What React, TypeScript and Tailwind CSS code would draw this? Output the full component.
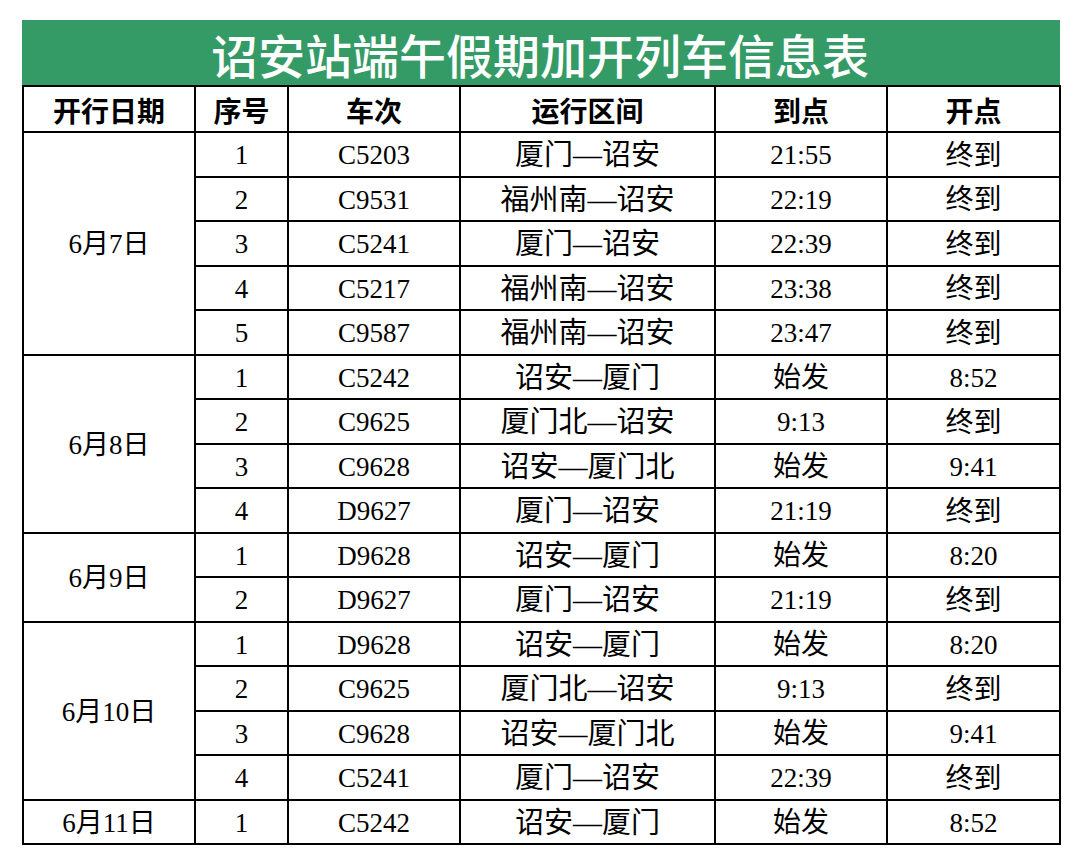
import React from "react";

type Row = { no: string; train: string; route: string; arr: string; dep: string };
type Group = { date: string; rows: Row[] };

const groups: Group[] = [
  {
    date: "6月7日",
    rows: [
      { no: "1", train: "C5203", route: "厦门—诏安", arr: "21:55", dep: "终到" },
      { no: "2", train: "C9531", route: "福州南—诏安", arr: "22:19", dep: "终到" },
      { no: "3", train: "C5241", route: "厦门—诏安", arr: "22:39", dep: "终到" },
      { no: "4", train: "C5217", route: "福州南—诏安", arr: "23:38", dep: "终到" },
      { no: "5", train: "C9587", route: "福州南—诏安", arr: "23:47", dep: "终到" },
    ],
  },
  {
    date: "6月8日",
    rows: [
      { no: "1", train: "C5242", route: "诏安—厦门", arr: "始发", dep: "8:52" },
      { no: "2", train: "C9625", route: "厦门北—诏安", arr: "9:13", dep: "终到" },
      { no: "3", train: "C9628", route: "诏安—厦门北", arr: "始发", dep: "9:41" },
      { no: "4", train: "D9627", route: "厦门—诏安", arr: "21:19", dep: "终到" },
    ],
  },
  {
    date: "6月9日",
    rows: [
      { no: "1", train: "D9628", route: "诏安—厦门", arr: "始发", dep: "8:20" },
      { no: "2", train: "D9627", route: "厦门—诏安", arr: "21:19", dep: "终到" },
    ],
  },
  {
    date: "6月10日",
    rows: [
      { no: "1", train: "D9628", route: "诏安—厦门", arr: "始发", dep: "8:20" },
      { no: "2", train: "C9625", route: "厦门北—诏安", arr: "9:13", dep: "终到" },
      { no: "3", train: "C9628", route: "诏安—厦门北", arr: "始发", dep: "9:41" },
      { no: "4", train: "C5241", route: "厦门—诏安", arr: "22:39", dep: "终到" },
    ],
  },
  {
    date: "6月11日",
    rows: [{ no: "1", train: "C5242", route: "诏安—厦门", arr: "始发", dep: "8:52" }],
  },
];

const cell = "border-2 border-black text-center align-middle p-0 leading-none";
const body = `${cell} pt-[3px]`;

export default function App() {
  return (
    <div className="w-[1080px] h-[865px] bg-white pt-[20px] pl-[22px] font-['Liberation_Serif','Noto_Sans_CJK_SC',serif] text-black">
      <div className="w-[1038px] h-[66px] bg-[#349a66] flex items-center justify-center">
        <span className="text-white text-[47px] leading-none font-['Noto_Sans_CJK_SC',serif] font-medium pr-[2px]">
          诏安站端午假期加开列车信息表
        </span>
      </div>
      <table className="w-[1037px] border-collapse table-fixed -mt-[1px]">
        <colgroup>
          <col className="w-[172px]" />
          <col className="w-[93px]" />
          <col className="w-[172px]" />
          <col className="w-[255px]" />
          <col className="w-[172px]" />
          <col className="w-[173px]" />
        </colgroup>
        <thead>
          <tr className="h-[46px]">
            {["开行日期", "序号", "车次", "运行区间", "到点", "开点"].map((h) => (
              <th key={h} className={`${cell} pt-[2px] text-[28px] font-semibold font-['Noto_Sans_CJK_SC',serif]`}>
                {h}
              </th>
            ))}
          </tr>
        </thead>
        <tbody>
          {groups.map((g) =>
            g.rows.map((r, i) => (
              <tr key={g.date + i} className="h-[44.5px]">
                {i === 0 && (
                  <td rowSpan={g.rows.length} className={`${body} text-[27px]`}>
                    {g.date}
                  </td>
                )}
                <td className={`${body} text-[27px]`}>{r.no}</td>
                <td className={`${body} text-[27px]`}>{r.train}</td>
                <td className={`${body} text-[29px]`}>{r.route}</td>
                <td className={`${body} ${/\d/.test(r.arr) ? "text-[27px]" : "text-[28px]"}`}>{r.arr}</td>
                <td className={`${body} ${/\d/.test(r.dep) ? "text-[27px]" : "text-[28px]"}`}>{r.dep}</td>
              </tr>
            ))
          )}
        </tbody>
      </table>
    </div>
  );
}
